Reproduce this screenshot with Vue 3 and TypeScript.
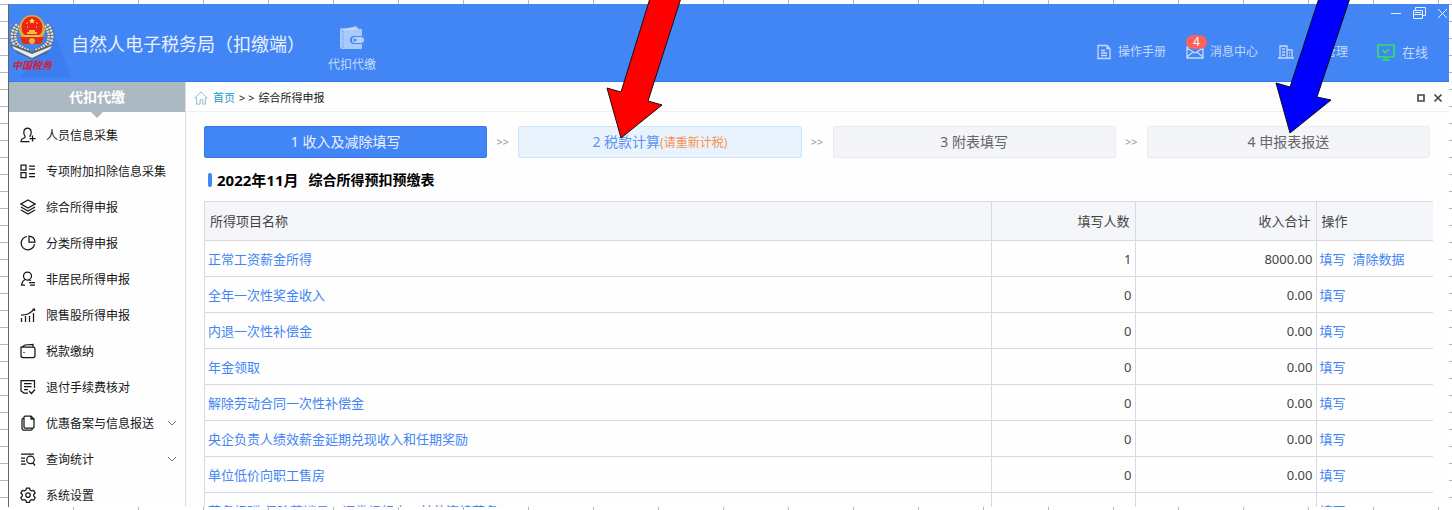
<script setup lang="ts">
interface MenuItem { label: string; icon: string; expandable?: boolean }
interface Row { name: string; count: number; total: string; clear?: boolean }

const menu: MenuItem[] = [
  { label: '人员信息采集', icon: 'M5 9C3 7 3.200 1 7.500 1s4.500 6 2.500 8v1M5 9c.7 1.500-.6 2-2 2.500C1.500 12 1 12.600 1 14.500h8.500M12.500 8.500v6M9.500 11.500h6' },
  { label: '专项附加扣除信息采集', icon: 'M1 2h5v5H1zM1 9.500h5v5H1zM9 3h6M9 6h6M9 10.500h6M9 13.500h6' },
  { label: '综合所得申报', icon: 'M8 1l7 4-7 4-7-4zM1 8l7 4 7-4M1 11l7 4 7-4' },
  { label: '分类所得申报', icon: 'M7 1.500A6.700 6.700 0 1 0 14.500 9M9 1v6h6A6 6 0 0 0 9 1z' },
  { label: '非居民所得申报', icon: 'M7.500 1a4 4 0 1 0 0 8 4 4 0 0 0 0-8zM5 8.500c-2 1-3 3-3.500 5.500H5M9 8.500l2 1M9 11.500h6M10 14h5' },
  { label: '限售股所得申报', icon: 'M1.500 11v4M5.500 9v6M9.500 9v6M13.500 6v9M1 8c6 0 8-1 12.500-5M12.500 2h2v2' },
  { label: '税款缴纳', icon: 'M1 4v8.500a2 2 0 0 0 2 2h10a2 2 0 0 0 2-2V6a2 2 0 0 0-2-2zM2 4l3-2 8-.5v2.500M4 9v1' },
  { label: '退付手续费核对', icon: 'M8 14H4l-3-2V1.500h13.500V9M4 4.500h7.500M4 7.500h7.500M4 10.500h4M9 12l2.500 2.500L15 10.500' },
  { label: '优惠备案与信息报送', icon: 'M4 3V2q0-1 1-1h6l3 3v8q0 1-1 1H5q-1 0-1-1zM4 3Q2 3 2 5v8q0 2 2 2h7q1.500 0 1.500-2M11 1v3h3', expandable: true },
  { label: '查询统计', icon: 'M1 3h13M1 7h4M1 10h4M1 13h5M10.500 5a3.800 3.800 0 1 0 0 7.600 3.800 3.800 0 0 0 0-7.600zM13 12l2 2.500', expandable: true },
  { label: '系统设置', icon: 'M6.500 1h3l.6 2 1.500.9 2.100-.5 1.500 2.600-1.500 1.500v1.500l1.500 1.500-1.500 2.600-2.100-.5-1.500.9-.6 1.900h-3l-.6-1.900-1.500-.9-2.100.5L.8 10.500 2.300 9V7.500L.8 6l1.500-2.600 2.100.5L5.900 3zM8 5.800a2.300 2.300 0 1 0 0 4.600 2.300 2.300 0 0 0 0-4.600z' }
]

const rows: Row[] = [
  { name: '正常工资薪金所得', count: 1, total: '8000.00', clear: true },
  { name: '全年一次性奖金收入', count: 0, total: '0.00' },
  { name: '内退一次性补偿金', count: 0, total: '0.00' },
  { name: '年金领取', count: 0, total: '0.00' },
  { name: '解除劳动合同一次性补偿金', count: 0, total: '0.00' },
  { name: '央企负责人绩效薪金延期兑现收入和任期奖励', count: 0, total: '0.00' },
  { name: '单位低价向职工售房', count: 0, total: '0.00' },
  { name: '劳务报酬(保险营销员、证券经纪人、其他连续劳务)', count: 0, total: '0.00' }
]

const steps = [
  { no: 1, label: '收入及减除填写', kind: 'active' },
  { no: 2, label: '税款计算', kind: 'next', note: '(请重新计税)' },
  { no: 3, label: '附表填写', kind: '' },
  { no: 4, label: '申报表报送', kind: '' }
]
</script>

<template>
  <div class="sheet">
    <div class="app">
      <header class="header">
        <svg class="emblem" viewBox="0 0 62 70" aria-hidden="true">
          <path d="M11 67L44 16L62 67z" fill="#3c7ef0" />
          <path d="M9 14C1 24 3 36 20 41M37 14C45 24 43 36 26 41" fill="none" stroke="#59697c" stroke-width="7" />
          <path d="M9 14C1 24 3 36 20 41M37 14C45 24 43 36 26 41" fill="none" stroke="#d9dddd" stroke-width="6" stroke-dasharray="2 1" />
          <path d="M9 14C1 24 3 36 20 41M37 14C45 24 43 36 26 41" fill="none" stroke="#68747f" stroke-width="1" />
          <path d="M1 34l7 1 15 6 15-6 6-1-4 5-17 8-17-8z" fill="#59636b" />
          <path d="M3 35l20 8 20-8-2 3-18 9-18-9z" fill="#eceeed" />
          <path d="M7 41l16 7 16-7" fill="none" stroke="#56616b" />
          <ellipse cx="23" cy="18" rx="13" ry="14" fill="#d9ac39" />
          <ellipse cx="23" cy="16.500" rx="10.500" ry="11" fill="#ee2415" />
          <path d="M11 26h24l-3 7H14z" fill="#e52b1c" />
          <path d="M18 22h10M20 20h6M15 25h16" stroke="#f3c044" stroke-width="2" />
          <circle cx="23" cy="30" r="3" fill="#e4b342" />
          <path d="M23 7l1 2h2l-1.500 1.500.5 2-2-1-2 1 .5-2L20 9h2z" fill="#ffe060" />
          <path d="M17 12h2M27 12h2M18 16h1M27 16h1" stroke="#ffe060" />
          <text x="3" y="58">中国税务</text>
        </svg>
        <h1>自然人电子税务局（扣缴端）</h1>
        <button class="module" type="button">
          <svg class="wallet" viewBox="0 0 26 24" aria-hidden="true">
            <path d="M1 4l16-4 3 3h3v7h-8q-4 0-4 4t4 4h8v4q0 1-1 1H3q-2 0-2-2z" fill="#a9cafc" />
            <path d="M1 3h17" stroke="#d7e7ff" /><path d="M4 5v17" stroke="#5c97f8" stroke-dasharray="1 1" />
            <rect x="13" y="11" width="12" height="6" rx="3" fill="#b5d2fe" /><circle cx="16" cy="14" r="1.500" fill="#4285f4" />
          </svg>
          <span>代扣代缴</span>
        </button>
        <div class="header-right">
          <div class="window-buttons">
            <button type="button" aria-label="最小化"><svg viewBox="0 0 14 14"><path d="M2 7.500h10" /></svg></button>
            <button type="button" aria-label="还原"><svg viewBox="0 0 14 14"><path d="M1.500 4.500h9v8h-9zM1.500 8.500h9M3.500 4V1.500h10v8H11M3 6.500h6" /></svg></button>
            <button type="button" aria-label="关闭"><svg viewBox="0 0 14 14"><path d="M3 3l9 9M12 3l-9 9" /></svg></button>
          </div>
          <nav class="tools">
            <a href="#"><svg viewBox="0 0 16 16"><path d="M2 1.500h9l3 3v10H2zM11 1.500v3h3M5 6.500h4M5 9h6M5 11.500h6" stroke-width="1.300" /></svg>操作手册</a>
            <a href="#" class="messages"><svg viewBox="0 0 18 16"><path d="M1 3h16v11H1zM1 4l8 5 8-5M1 13l6-5M17 13l-6-5" stroke-width="1.300" /></svg><b>4</b>消息中心</a>
            <a href="#"><svg viewBox="0 0 16 16"><path d="M2 14V2h7v12M9 6h5v8M0 14h16M4 5h3M4 8h3M4 11h3M11 9h1M11 12h1" stroke-width="1.300" /></svg>单位管理</a>
            <a href="#" class="online"><svg viewBox="0 0 20 18"><path d="M2 2h16v12H2zM6 17h8M10 14v3M7 7l2 3 4-4" stroke-width="1.700" /></svg>在线</a>
          </nav>
        </div>
      </header>
      <div class="body">
        <aside class="sidebar">
          <h2>代扣代缴</h2>
          <nav>
            <a v-for="item in menu" :key="item.label" href="#">
              <svg class="menu-icon" viewBox="0 0 16 16" aria-hidden="true"><path :d="item.icon" stroke-width="1.250" /></svg>
              <span>{{ item.label }}</span>
              <svg v-if="item.expandable" class="chevron" viewBox="0 0 10 10" aria-hidden="true"><path d="M1 3l4 4 4-4" /></svg>
            </a>
          </nav>
        </aside>
        <main>
          <div class="crumbs">
            <svg class="home" viewBox="0 0 16 16" aria-hidden="true"><path d="M1 8l7-7 7 7h-2v7h-3v-5H7v5H3V8z" /></svg>
            <a href="#">首页</a><span class="separator">&gt; &gt;</span><span>综合所得申报</span>
            <div class="page-buttons">
              <button type="button" aria-label="最大化"><svg viewBox="0 0 10 10"><path d="M2 2h6v6H2z" stroke-width="1.600" /></svg></button>
              <button type="button" aria-label="关闭页面"><svg viewBox="0 0 10 10"><path d="M1.500 1.500l7 7M8.500 1.500l-7 7" stroke-width="1.600" /></svg></button>
            </div>
          </div>
          <div class="content">
            <div class="steps">
              <template v-for="(step, index) in steps" :key="step.no">
                <button type="button" :class="step.kind">{{ step.no }} {{ step.label }}<small v-if="step.note">{{ step.note }}</small></button>
                <span v-if="index < steps.length - 1">&gt;&gt;</span>
              </template>
            </div>
            <h3><span class="period">2022年11月</span><span>综合所得预扣预缴表</span></h3>
            <table>
              <colgroup><col /><col class="count-col" /><col class="total-col" /><col class="action-col" /></colgroup>
              <thead><tr><th scope="col">所得项目名称</th><th scope="col" class="number">填写人数</th><th scope="col" class="number">收入合计</th><th scope="col">操作</th></tr></thead>
              <tbody>
                <tr v-for="row in rows" :key="row.name">
                  <td><a href="#">{{ row.name }}</a></td><td class="number">{{ row.count }}</td><td class="number">{{ row.total }}</td>
                  <td><a href="#">填写</a><a v-if="row.clear" href="#">清除数据</a></td>
                </tr>
              </tbody>
            </table>
          </div>
        </main>
      </div>
    </div>
    <svg class="arrow red" viewBox="0 0 100 140" aria-hidden="true"><path d="M48-5L18 92 4 88 18 138 59 105 45 101 79-5z" /></svg>
    <svg class="arrow blue" viewBox="0 0 100 140" aria-hidden="true"><path d="M48-5L18 87 4 83 18 133 59 100 45 97 79-5z" /></svg>
  </div>
</template>

<style>
body { margin: 0; }
</style>

<style scoped>
* { box-sizing: border-box; }
.sheet { position: relative; height: 100vh; padding: 4px 3px 3px 8px; overflow: hidden; background: repeating-linear-gradient(to bottom, transparent 0 16px, #b5b5b5 16px 17px) 0 5px, repeating-linear-gradient(to right, transparent 0 64px, #b5b5b5 64px 65px) 9px 0, #fff; font-family: "Noto Sans", "Noto Sans CJK SC", sans-serif; font-size: 12px; color: #171717; }
.app { height: 100%; display: flex; flex-direction: column; overflow: hidden; border-left: 1px solid #666; background: #fefefe; }
button { padding: 0; border: 0; background: transparent; font: inherit; color: inherit; }
a { color: inherit; text-decoration: none; }
svg { display: block; fill: none; stroke: currentColor; stroke-width: 1; }
.header { flex: 0 0 78px; display: flex; background: #4285f4; border-bottom: 1px solid #347ae9; color: #fff; }
.emblem { width: 62px; height: 70px; margin-top: 7px; stroke: none; }
.emblem text { fill: #d02038; font-size: 10px; font-weight: 700; font-style: italic; }
h1 { margin: 0; padding-top: 3px; font-size: 18px; line-height: 74px; font-weight: 400; white-space: nowrap; color: #e9f1ff; }
.module { align-self: flex-start; display: flex; flex-direction: column; align-items: center; gap: 6px; padding: 22px 0 0 23px; color: #c5dcff; }
.wallet { width: 26px; height: 24px; stroke: none; }
.module span { font-size: 12px; line-height: 18px; white-space: nowrap; }
.header-right { flex: 1; display: flex; flex-direction: column; align-items: flex-end; }
.window-buttons { display: flex; gap: 9px; height: 17px; align-items: center; color: #e3eeff; }
.window-buttons svg { width: 14px; height: 14px; }
.tools { display: flex; gap: 20px; padding: 21px 21px 0 0; color: #c3dafb; font-size: 12px; line-height: 20px; }
.tools a { display: flex; gap: 6px; align-items: center; position: relative; white-space: nowrap; }
.tools svg { width: 16px; height: 16px; }
.tools .messages svg { width: 18px; }
.tools b { position: absolute; left: 0; top: -7px; width: 21px; height: 14px; border-radius: 7px; background: #fc625d; color: #fff; font-weight: 400; line-height: 14px; text-align: center; }
.tools .online { margin-left: 8px; font-size: 13px; }
.tools .online svg { width: 20px; height: 18px; color: #35df63; }
.body { flex: 1; min-height: 0; display: flex; }
.sidebar { flex: 0 0 176px; border-right: 1px solid #ddd; }
h2 { position: relative; width: 176px; margin: 0; background: #abb9c2; color: #fff; font-size: 14px; line-height: 30px; text-align: center; }
h2::after { content: ""; position: absolute; left: 82px; top: 30px; border: 6px solid transparent; border-top-color: #abb9c2; border-bottom: 0; }
.sidebar nav { padding-top: 5px; }
.sidebar nav a { height: 36px; display: flex; align-items: center; padding: 0 8px 0 11px; white-space: nowrap; }
.sidebar nav span { flex: 1; }
.menu-icon { width: 16px; height: 16px; margin-right: 10px; }
.chevron { width: 10px; height: 10px; color: #777; }
main { flex: 1; min-width: 0; }
.crumbs { height: 30px; display: flex; align-items: center; padding: 2px 6px 0 8px; border-bottom: 1px solid #f0f0f0; font-size: 11px; line-height: 20px; }
.home { width: 14px; height: 14px; margin-right: 5px; color: #7fb6d3; }
.crumbs a { color: #199bd0; }
.separator { margin: 0 4px; }
.page-buttons { display: flex; gap: 7px; margin-left: auto; }
.page-buttons svg { width: 10px; height: 10px; color: #444; }
.content { padding: 14px 16px 0 18px; }
.steps { display: flex; align-items: stretch; padding-right: 3px; }
.steps button { flex: 1 1 0; height: 32px; border: 1px solid #ececf0; border-radius: 2px; background: #f4f5f9; color: #666; font-size: 14px; line-height: 30px; white-space: nowrap; }
.steps .active { background: #4285f4; border-color: #3879e8; color: #e9f1ff; }
.steps .next { background: #e8f3fe; border-color: #cfe6fb; color: #5c94ef; }
.steps small { font-size: 12px; color: #fa9149; }
.steps > span { flex: 0 0 31px; color: #999; font-size: 11px; line-height: 32px; text-align: center; }
h3 { display: flex; gap: 10px; align-items: center; margin: 0; padding-left: 4px; height: 43px; color: #000; font-size: 14px; line-height: 20px; }
h3::before { content: ""; width: 4px; height: 14px; margin-right: -5px; border-radius: 2px; background: #4285f4; }
.period { font-size: 15px; }
table { width: 100%; border-collapse: collapse; table-layout: fixed; font-size: 13px; line-height: 20px; }
.count-col { width: 144px; } .total-col { width: 181px; } .action-col { width: 117px; }
th, td { border: 1px solid #d9dae1; padding: 0 3px; text-align: left; color: #444; white-space: nowrap; }
th:last-child, td:last-child { border-right: 0; }
th { height: 39px; padding: 0 5px; background: #f5f6fa; font-weight: 400; }
td { height: 36px; }
.number { text-align: right; }
td a { color: #4285f4; }
td a + a { margin-left: 7px; }
.arrow { position: absolute; top: 0; width: 100px; height: 140px; stroke: #111; pointer-events: none; }
.red { left: calc(42% - 7px); fill: #f00; }
.blue { left: calc(88% - 6px); fill: #00f; }
</style>
